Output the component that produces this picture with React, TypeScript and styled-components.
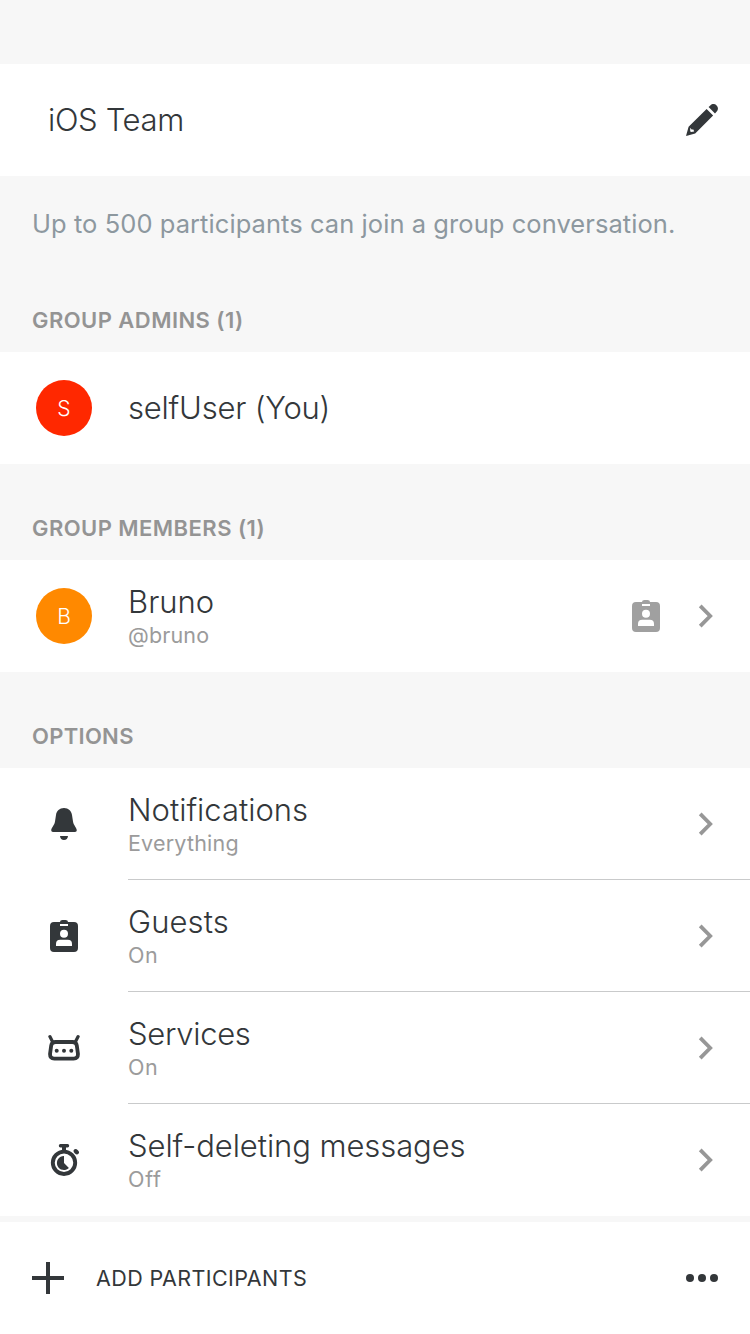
import React from "react";
import styled, { createGlobalStyle } from "styled-components";

const ink = "#33373a";
const grey = "#979797";

const Global = createGlobalStyle`
  * { box-sizing: border-box; }
  body { margin: 0; background: #f7f7f7; }
`;

const Screen = styled.main`
  width: 750px;
  height: 1334px;
  overflow: hidden;
  display: flex;
  flex-direction: column;
  padding-top: 64px;
  background: #f7f7f7;
  color: ${ink};
  font-family: Inter, "Liberation Sans", sans-serif;
`;

const NameBar = styled.header`
  height: 112px;
  flex: none;
  display: flex;
  align-items: center;
  justify-content: space-between;
  padding: 0 32px 0 48px;
  background: #fff;
`;

const Label = styled.span<{ $spacing?: number }>`
  font-size: 31px;
  font-weight: 300;
  line-height: 40px;
  letter-spacing: ${(p) => p.$spacing ?? 0}px;
  white-space: nowrap;
`;

const Hint = styled.p`
  height: 96px;
  flex: none;
  margin: 0;
  padding: 0 32px;
  line-height: 95px;
  font-size: 25.5px;
  letter-spacing: 0.06px;
  white-space: nowrap;
  color: #8d989f;
`;

const SectionTitle = styled.h2<{ $height: number; $spacing?: number }>`
  height: ${(p) => p.$height}px;
  flex: none;
  margin: 0;
  padding: 0 32px 17px;
  display: flex;
  align-items: flex-end;
  font-size: 22px;
  line-height: 30px;
  font-weight: 600;
  letter-spacing: ${(p) => p.$spacing ?? 0.45}px;
  color: #949494;
`;

const Row = styled.div`
  height: 112px;
  flex: none;
  display: flex;
  background: #fff;
`;

const Lead = styled.div`
  width: 128px;
  flex: none;
  display: flex;
  align-items: center;
  justify-content: center;
`;

const Glyph = styled.svg`
  display: block;
  flex: none;
`;

const Avatar = styled.div<{ $color: string }>`
  width: 56px;
  height: 56px;
  border-radius: 50%;
  display: flex;
  align-items: center;
  justify-content: center;
  background: ${(p) => p.$color};
  color: #fff;
  font-size: 21px;
  font-weight: 300;
`;

const Body = styled.div<{ $divider?: boolean }>`
  flex: 1;
  display: flex;
  align-items: center;
  justify-content: space-between;
  padding-right: 34px;
  border-bottom: 1px solid ${(p) => (p.$divider ? "#c9cacb" : "transparent")};
`;

const Texts = styled.div`
  display: flex;
  flex-direction: column;
  padding-bottom: 1px;
`;

const Sub = styled.span<{ $spacing?: number }>`
  font-size: 21.5px;
  line-height: 26px;
  letter-spacing: ${(p) => p.$spacing ?? 0.15}px;
  color: #9b9b9b;
`;

const Accessories = styled.div`
  display: flex;
  align-items: center;
  gap: 36px;
`;

const Footer = styled.footer`
  height: 112px;
  flex: none;
  margin-top: 6px;
  display: flex;
  align-items: center;
  padding: 0 32px;
  background: #fff;
`;

const Action = styled.span`
  flex: 1;
  padding-left: 32px;
  font-size: 21.5px;
  letter-spacing: 0.4px;
`;

const Pencil = () => (
  <Glyph width="32" height="32" viewBox="0 0 32 32" fill={ink}>
    <path d="M22.6 3 24.3 1.5C26.2-.4 28.9-.4 30.6 1.4 32.4 3.1 32.4 5.8 30.5 7.7L29 9.4Z" />
    <path fillRule="evenodd" d="M20.6 4.9 27.1 11.4 9.2 29.4 0 32 2.6 22.8ZM4.2 23.8 4.2 27.2 5 27.9 8.2 27.5 7.4 25.4 5.6 25.5Z" />
  </Glyph>
);

const Badge = ({ color }: { color: string }) => (
  <Glyph width="28" height="32" viewBox="0 0 28 32" fill={color}>
    <path fillRule="evenodd" d="M4 2H10Q10 0 12.5 0H15.5Q18 0 18 2H24Q28 2 28 6V28Q28 32 24 32H4Q0 32 0 28V6Q0 2 4 2ZM10 4V6H18V4ZM14 9.8A4 4 0 1 0 14 17.8 4 4 0 1 0 14 9.8ZM6 26H22V24Q22 19.8 17.8 19.8H10.2Q6 19.8 6 24Z" />
  </Glyph>
);

const Chevron = () => (
  <Glyph width="20" height="24" viewBox="0 0 20 24" fill="none" stroke={grey} strokeWidth="3.8">
    <path d="M4.2 1.9 14.2 12 4.2 22.1" />
  </Glyph>
);

const Bell = () => (
  <Glyph width="32" height="32" viewBox="0 0 32 32" fill={ink}>
    <path d="M16 0C20.5 0 23.4 3 24 7L25 13.4C25.6 17.4 28.8 19.5 28.8 22.3Q28.8 24 27 24H5Q3.2 24 3.2 22.3C3.2 19.5 6.4 17.4 7 13.4L8 7C8.6 3 11.5 0 16 0ZM12 28H20Q19.6 32 16 32T12 28Z" />
  </Glyph>
);

const Robot = () => (
  <Glyph width="32" height="32" viewBox="0 0 32 32" fill={ink}>
    <path d="M7.6 10H24.4Q28.3 10 28.8 13.6L29.9 21.4Q30.4 26.6 25.6 26.6H6.4Q1.6 26.6 2.1 21.4L3.2 13.6Q3.7 10 7.6 10Z" fill="none" stroke={ink} strokeWidth="3.8" />
    <path d="M1.9 4.6 4.8 10.2M30.1 4.6 27.2 10.2" fill="none" stroke={ink} strokeWidth="3.2" strokeLinecap="round" />
    <circle cx="8.7" cy="18.8" r="2" />
    <circle cx="16" cy="18.8" r="2" />
    <circle cx="23.3" cy="18.8" r="2" />
  </Glyph>
);

const Stopwatch = () => (
  <Glyph width="32" height="32" viewBox="0 0 32 32" fill={ink}>
    <circle cx="16" cy="18.8" r="11.2" fill="none" stroke={ink} strokeWidth="3.9" />
    <path d="M12.4 0H19.6Q21.2 0 21.2 1.8T19.6 3.6H18V7H14V3.6H12.4Q10.8 3.6 10.8 1.8T12.4 0ZM16 12V19L20.9 23.9A7 7 0 1 1 16 12Z" />
    <ellipse cx="28.3" cy="7.7" rx="3" ry="2.2" transform="rotate(45 28.3 7.7)" />
  </Glyph>
);

const Plus = () => (
  <Glyph width="32" height="32" viewBox="0 0 32 32" fill={ink}>
    <path d="M14 0H18V14H32V18H18V32H14V18H0V14H14Z" />
  </Glyph>
);

const More = () => (
  <Glyph width="32" height="8" viewBox="0 0 32 8" fill={ink}>
    <circle cx="4" cy="4" r="4" />
    <circle cx="16" cy="4" r="4" />
    <circle cx="28" cy="4" r="4" />
  </Glyph>
);

const options = [
  { label: "Notifications", value: "Everything", icon: <Bell />, spacing: 0, sub: 0.2 },
  { label: "Guests", value: "On", icon: <Badge color={ink} />, spacing: 0.1, sub: 0.5 },
  { label: "Services", value: "On", icon: <Robot />, spacing: -0.3, sub: 0.5 },
  { label: "Self-deleting messages", value: "Off", icon: <Stopwatch />, spacing: -0.08, sub: 0.7 },
];

export default function App() {
  return (
    <>
      <Global />
      <Screen>
        <NameBar>
          <Label $spacing={-0.35}>iOS Team</Label>
          <Pencil />
        </NameBar>
        <Hint>Up to 500 participants can join a group conversation.</Hint>
        <SectionTitle $height={80}>GROUP ADMINS (1)</SectionTitle>
        <Row>
          <Lead><Avatar $color="#ff2800">S</Avatar></Lead>
          <Body><Label $spacing={-0.2}>selfUser (You)</Label></Body>
        </Row>
        <SectionTitle $height={96}>GROUP MEMBERS (1)</SectionTitle>
        <Row>
          <Lead><Avatar $color="#ff8900">B</Avatar></Lead>
          <Body>
            <Texts>
              <Label>Bruno</Label>
              <Sub>@bruno</Sub>
            </Texts>
            <Accessories>
              <Badge color="#a0a0a0" />
              <Chevron />
            </Accessories>
          </Body>
        </Row>
        <SectionTitle $height={96} $spacing={0.3}>OPTIONS</SectionTitle>
        {options.map((o, i) => (
          <Row key={o.label}>
            <Lead>{o.icon}</Lead>
            <Body $divider={i < options.length - 1}>
              <Texts>
                <Label $spacing={o.spacing}>{o.label}</Label>
                <Sub $spacing={o.sub}>{o.value}</Sub>
              </Texts>
              <Chevron />
            </Body>
          </Row>
        ))}
        <Footer>
          <Plus />
          <Action>ADD PARTICIPANTS</Action>
          <More />
        </Footer>
      </Screen>
    </>
  );
}
